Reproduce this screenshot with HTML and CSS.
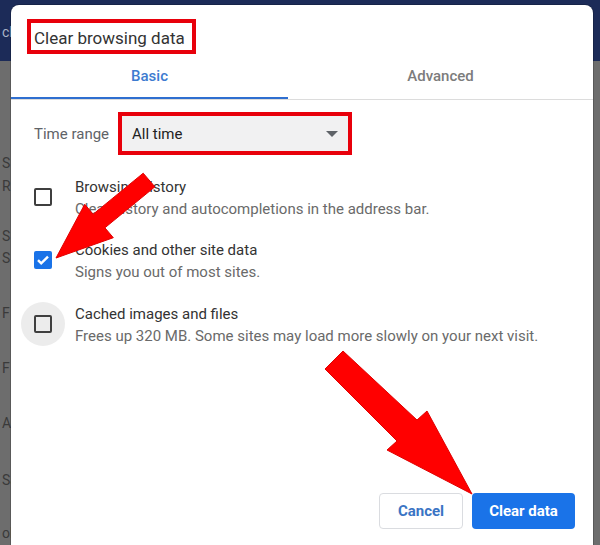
FILE: index.html
```html
<!DOCTYPE html>
<html>
<head>
<meta charset="utf-8">
<link rel="stylesheet" href="styles.css">
</head>
<body>
<div class="page">
  <div class="backdrop">
    <div class="bk bk-top">cl</div>
    <div class="bk b1">S</div>
    <div class="bk b2">R</div>
    <div class="bk b3">S</div>
    <div class="bk b4">S</div>
    <div class="bk b5">F</div>
    <div class="bk b5">F</div>
    <div class="bk b5">A</div>
    <div class="bk b6">Sa</div>
    <div class="bk b7">ol</div>
  </div>

  <div class="dialog">
    <div class="header">
      <span class="title hl">Clear browsing data</span>
    </div>
    <div class="tabs">
      <div class="tab tab-basic active">Basic</div>
      <div class="tab tab-adv">Advanced</div>
    </div>

    <div class="range">
      <span class="range-label">Time range</span>
      <div class="select">
        <span>All time</span>
        <span class="caret"></span>
      </div>
    </div>

    <div class="options">
      <div class="option">
        <div class="cb-wrap"><span class="cb"></span></div>
        <div class="opt-text">
          <div class="opt-title">Browsing history</div>
          <div class="opt-sub">Clear history and autocompletions in the address bar.</div>
        </div>
      </div>
      <div class="option">
        <div class="cb-wrap"><span class="cb checked">
          <svg viewBox="0 0 18 18" width="18" height="18"><path d="M4 9.2l3.2 3.2L14 5.6" fill="none" stroke="#fff" stroke-width="2.4"/></svg>
        </span></div>
        <div class="opt-text">
          <div class="opt-title">Cookies and other site data</div>
          <div class="opt-sub">Signs you out of most sites.</div>
        </div>
      </div>
      <div class="option">
        <div class="cb-wrap hover"><span class="cb"></span></div>
        <div class="opt-text">
          <div class="opt-title">Cached images and files</div>
          <div class="opt-sub">Frees up 320 MB. Some sites may load more slowly on your next visit.</div>
        </div>
      </div>
    </div>

    <div class="footer">
      <button class="btn btn-cancel">Cancel</button>
      <button class="btn btn-primary">Clear data</button>
    </div>
  </div>

  <svg class="arrows" viewBox="0 0 600 545" width="600" height="545">
    <polygon points="143.2,173.2 154.9,186.8 104.9,227.8 113.3,237.7 56,258 84.7,204.3 93.2,214.2" fill="#ff0000" stroke="#e00000" stroke-width="1"/>
    <polygon points="343,351 417,420 427,411 472,494 387,450 397,441 325,369" fill="#ff0000" stroke="#e00000" stroke-width="1"/>
  </svg>
</div>
</body>
</html>
```

FILE: styles.css
```css
* { box-sizing: border-box; }
html, body { margin: 0; padding: 0; }
body { font-family: Roboto, "Liberation Sans", sans-serif; }

.page {
  position: relative;
  width: 600px;
  height: 545px;
  overflow: hidden;
  background: linear-gradient(#1c2b58 0, #1c2b58 61px, #6d6d6d 61px);
}

.backdrop {
  display: flex;
  flex-direction: column;
  padding-left: 2px;
  font-size: 14px;
  line-height: 20px;
  color: #3a3a3a;
}
.bk-top { margin-top: 22px; color: #a9b3c7; }
.b1 { margin-top: 111px; }
.b2 { margin-top: 3px; }
.b3 { margin-top: 30px; }
.b4 { margin-top: 2px; }
.b5 { margin-top: 35px; }
.b6 { margin-top: 37px; }
.b7 { margin-top: 33px; }

.dialog {
  position: absolute;
  left: 11px;
  top: 5px;
  width: 582px;
  height: 570px;
  background: #fff;
  border-radius: 8px;
  box-shadow: 0 0 0 1px rgba(0,0,0,0.18);
}

.header { padding: 14px 0 0 16px; }
.title {
  display: inline-block;
  font-size: 17px;
  line-height: 24px;
  color: #333;
  padding: 3px 7px 0 3px;
}
.hl { border: 4px solid #e8000b; }

.tabs {
  display: flex;
  margin-top: 1px;
  border-bottom: 1px solid #dcdcdc;
}
.tab {
  height: 44px;
  line-height: 42px;
  text-align: center;
  font-size: 15px;
  font-weight: 500;
  color: #7c7c7c;
}
.tab-basic { width: 277px; }
.tab-adv { flex: 1; }
.tab.active {
  color: #3d7bd0;
  border-bottom: 2px solid #2f6fd0;
}

.range {
  display: flex;
  align-items: center;
  margin-top: 12px;
  padding-left: 23px;
}
.range-label {
  font-size: 15px;
  color: #5f6368;
  width: 84px;
}
.select {
  width: 234px;
  height: 43px;
  border: 4px solid #e8000b;
  background: #f1f1f2;
  display: flex;
  align-items: center;
  justify-content: space-between;
  padding: 0 6px 0 10px;
  font-size: 15px;
  color: #222;
}
.caret {
  width: 0;
  height: 0;
  border-left: 6px solid transparent;
  border-right: 6px solid transparent;
  border-top: 6px solid #5f6368;
  margin-right: 4px;
}

.options { margin-top: 10px; padding-left: 10px; }
.option {
  display: flex;
  align-items: center;
  height: 63.5px;
}
.cb-wrap {
  width: 44px;
  height: 44px;
  border-radius: 50%;
  display: flex;
  align-items: center;
  justify-content: center;
  margin-right: 10px;
  flex-shrink: 0;
}
.cb-wrap.hover { background: #ececec; }
.cb {
  width: 18px;
  height: 18px;
  border: 2px solid #3f3f3f;
  border-radius: 2px;
  display: block;
}
.cb.checked {
  background: #1a73e8;
  border: none;
}
.cb svg { display: block; }

.opt-text { padding-top: 2px; }
.opt-title {
  font-size: 15px;
  line-height: 22px;
  color: #333;
}
.opt-sub {
  font-size: 15px;
  line-height: 22px;
  color: #6a6a6a;
}

.footer {
  display: flex;
  justify-content: flex-end;
  gap: 9px;
  padding-right: 18px;
  margin-top: 137px;
}
.btn {
  height: 36px;
  border-radius: 4px;
  font-family: Roboto, "Liberation Sans", sans-serif;
  font-size: 15px;
  font-weight: 700;
  padding: 0;
}
.btn-cancel {
  width: 84px;
  background: #fff;
  border: 1px solid #dadce0;
  color: #3a74c4;
}
.btn-primary {
  width: 103px;
  background: #1a73e8;
  border: none;
  color: #fff;
}

.arrows {
  position: absolute;
  left: 0;
  top: 0;
  pointer-events: none;
}
```
